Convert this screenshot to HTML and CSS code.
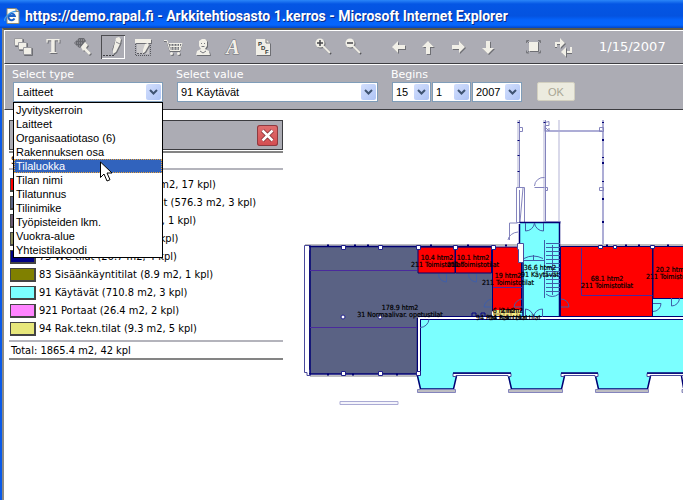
FILE: index.html
```html
<!DOCTYPE html>
<html lang="fi">
<head>
<meta charset="utf-8">
<title>Arkkitehtiosasto 1.kerros</title>
<link rel="stylesheet" href="styles.css">
</head>
<body>
<div class="window">
<header class="titlebar">
  <svg class="page-icon" width="16" height="16" viewBox="0 0 16 16" aria-hidden="true">
    <path d="M3 .5h9l3 3v12H3z" fill="#fffef4" stroke="#8d8a78"/>
    <path d="M12 .5v3h3" fill="#d8d4c0" stroke="#8d8a78"/>
    <path d="M10.500 10.500A3.300 3.300 0 1 1 10.800 8H5" fill="none" stroke="#1c62c8" stroke-width="2"/>
    <path d="M1 13C-1 10 7 3 12 3.500" fill="none" stroke="#3f9be8" stroke-width="1.300"/>
  </svg>
  <h1 class="title">https://demo.rapal.fi - Arkkitehtiosasto 1.kerros - Microsoft Internet Explorer</h1>
</header>
<div class="frame">
<nav class="toolbar" aria-label="Toolbar">
  <div class="group">
    <button class="tool" aria-label="Layers"><svg viewBox="0 0 24 24"><g class="lit cut"><path d="M3.500 3.500h8v7h-8z"/><path d="M7.500 7.500h8v7h-8z"/><path d="M12.500 12.500h8v7h-8z"/></g></svg></button>
    <button class="tool" aria-label="Text"><svg viewBox="0 0 24 24"><text class="lit letter-t" x="12" y="18">T</text></svg></button>
    <button class="tool" aria-label="Paint"><svg viewBox="0 0 24 24"><path d="M3 8l5-5h5l2 3-6 7-2-1z" fill="#68696f"/><path d="M4 8h8M6 5h8M6 11h4" stroke="#a9a9b0" stroke-dasharray="1 1"/><path class="lit" d="M10 12l4-5 3 3-2 3 5 5-2 2-5-5-1 1z"/></svg></button>
    <button class="tool active" aria-label="Draw"><svg viewBox="0 0 24 24"><path d="M2 20.500h11" stroke="#3e3f43" stroke-dasharray="2 1"/><path d="M13 20L20 8M13 19l-1-5 3-9" stroke="#55565b" fill="none"/><path class="lit" d="M15 3l3-1 2 2-1 5-4 8-3 2v-4z"/><path d="M15 7l4 2" stroke="#8b8b90"/></svg></button>
    <button class="tool" aria-label="Edit area"><svg viewBox="0 0 24 24"><path class="lit" d="M4 4h16v4H4z"/><path d="M4.500 9v11.500h15V9" fill="none" stroke="#55565b" stroke-dasharray="1 1"/><path d="M6 9h12v10H6z" fill="#c9c8ca"/><path d="M6 18.500h7l4-8" fill="none" stroke="#5d5d62" stroke-dasharray="2 1"/><path class="lit" d="M14 9l3-1 1 2-4 7-2 1 0-3z"/></svg></button>
    <button class="tool" aria-label="Cart"><svg viewBox="0 0 24 24"><path d="M7 8h14l-2 7H9z" fill="#85868b"/><path class="line" d="M3 5.500h3l3 10h10l2-7M8 8.500h13M9 11.500h11M10 8v7M13 8v7M16 8v7M18.500 8v7"/><circle class="lit" cx="10.500" cy="18.500" r="1.500"/><circle class="lit" cx="17.500" cy="18.500" r="1.500"/></svg></button>
    <button class="tool" aria-label="User"><svg viewBox="0 0 24 24"><path class="lit" d="M8 6l3-2h3l2 2v5l-2 3 4 2 1 4H5l1-4 4-2-2-3z"/><path d="M10 8.500h1M13 8.500h1M10.500 11.500h3M9 16l3 2 3-2" fill="none" stroke="#77787d"/></svg></button>
    <button class="tool" aria-label="Font"><svg viewBox="0 0 24 24"><text class="letter-a" x="12" y="19">A</text></svg></button>
    <button class="tool" aria-label="PDF"><svg viewBox="0 0 24 24"><path class="lit" d="M5 4h10l4 4v12H5z"/><path d="M15 4v4h4" fill="none" stroke="#77787d"/><g class="pdf"><text x="7" y="11">P</text><text x="10" y="15">D</text><text x="14" y="19">F</text></g></svg></button>
  </div>
  <div class="group zooms">
    <button class="tool" aria-label="Zoom in"><svg viewBox="0 0 24 24"><circle class="lit" cx="9" cy="8" r="4.500"/><path class="handle" d="M12 11l7 7"/><path d="M6 8h6M9 5v6" stroke="#44454a" stroke-width="1.500"/></svg></button>
    <button class="tool" aria-label="Zoom out"><svg viewBox="0 0 24 24"><circle class="lit" cx="9" cy="8" r="4.500"/><path class="handle" d="M12 11l7 7"/><path d="M6 8h6" stroke="#44454a" stroke-width="1.500"/></svg></button>
  </div>
  <div class="group">
    <button class="tool" aria-label="Pan left"><svg viewBox="0 0 24 24"><path class="lit" d="M6 12l6-6v4h7v4h-7v4z"/></svg></button>
    <button class="tool" aria-label="Pan up"><svg viewBox="0 0 24 24"><path class="lit" d="M12 6l6 6h-4v7h-4v-7H6z"/></svg></button>
    <button class="tool" aria-label="Pan right"><svg viewBox="0 0 24 24"><path class="lit" d="M19 12l-6-6v4H6v4h7v4z"/></svg></button>
    <button class="tool" aria-label="Pan down"><svg viewBox="0 0 24 24"><path class="lit" d="M12 19l6-6h-4V6h-4v7H6z"/></svg></button>
  </div>
  <div class="group">
    <button class="tool" aria-label="Fit"><svg viewBox="0 0 24 24"><path class="lit" d="M8 7h9v9H8z"/><path d="M5.500 8V5.500H8M17 5.500h2.500V8M5.500 15.500v2.500H8M17 18h2.500v-2.500M6 6l2 2M19 6l-2 2M6 18l2-2M19 18l-2-2" fill="none" stroke="#77787d"/></svg></button>
    <button class="tool" aria-label="Refresh"><svg viewBox="0 0 24 24"><path class="line thick" d="M5 12V8h5"/><path class="lit" d="M9 3l5 5-5 5z"/><path class="line thick" d="M20 12v5h-5"/><path class="lit" d="M15 12l-5 5 5 5z"/></svg></button>
  </div>
  <time class="date" datetime="2007-01-15">1/15/2007</time>
</nav>
<form class="filters">
  <div class="field type">
    <label for="type">Select type</label>
    <div class="combo">
      <select id="type"><option>Laitteet</option></select>
      <svg class="drop" width="15" height="16" viewBox="0 0 15 16"><path d="M4 6l3.500 3.500L11 6"/></svg>
      <ul class="options" role="listbox" aria-label="Select type">
        <li role="option">Jyvityskerroin</li>
        <li role="option">Laitteet</li>
        <li role="option">Organisaatiotaso (6)</li>
        <li role="option">Rakennuksen osa</li>
        <li role="option" class="hot" aria-selected="true">Tilaluokka</li>
        <li role="option">Tilan nimi</li>
        <li role="option">Tilatunnus</li>
        <li role="option">Tilinimike</li>
        <li role="option">Työpisteiden lkm.</li>
        <li role="option">Vuokra-alue</li>
        <li role="option">Yhteistilakoodi</li>
      </ul>
      <svg class="pointer" width="13" height="22" viewBox="0 0 13 22" aria-hidden="true"><path d="M.500 1v15.500l3.500-3.500 3 7 3-1.300-3-6.700h5z" fill="#fff" stroke="#000"/></svg>
    </div>
  </div>
  <div class="field value">
    <label for="value">Select value</label>
    <div class="combo">
      <select id="value"><option>91 Käytävät</option></select>
      <svg class="drop" width="15" height="16" viewBox="0 0 15 16"><path d="M4 6l3.500 3.500L11 6"/></svg>
    </div>
  </div>
  <div class="field">
    <label for="day">Begins</label>
    <div class="dates">
      <div class="combo day"><select id="day"><option>15</option></select><svg class="drop" width="15" height="16" viewBox="0 0 15 16"><path d="M4 6l3.500 3.500L11 6"/></svg></div>
      <div class="combo day"><select aria-label="Month"><option>1</option></select><svg class="drop" width="15" height="16" viewBox="0 0 15 16"><path d="M4 6l3.500 3.500L11 6"/></svg></div>
      <div class="combo year"><select aria-label="Year"><option>2007</option></select><svg class="drop" width="15" height="16" viewBox="0 0 15 16"><path d="M4 6l3.500 3.500L11 6"/></svg></div>
    </div>
  </div>
  <button class="ok" type="button" disabled>OK</button>
</form>
<main class="content">
  <section class="legend" aria-label="Legend">
    <div class="legend-head">
      <button class="close" aria-label="Close"><svg width="21" height="21" viewBox="0 0 21 21"><path d="M5.500 5.500l10 10M15.500 5.500l-10 10" stroke="#7c2a30" stroke-width="4"/><path d="M5.500 5.500l10 10M15.500 5.500l-10 10" stroke="#fff" stroke-width="2.500"/></svg></button>
    </div>
    <p class="caption">Selite</p>
    <ul class="rows">
      <li><i class="swatch red"></i>211 Toimistotilat (291.5 m2, 17 kpl)</li>
      <li><i class="swatch slate"></i>31 Normaaliva opetustilat (576.3 m2, 3 kpl)</li>
      <li><i class="swatch plum"></i>62 Ravintolatil. (62.7 m2, 1 kpl)</li>
      <li><i class="swatch moss"></i>72 Varastot (53.1 m2, 4 kpl)</li>
      <li><i class="swatch navy"></i>75 WC-tilat (26.7 m2, 4 kpl)</li>
      <li><i class="swatch olive"></i>83 Sisäänkäyntitilat (8.9 m2, 1 kpl)</li>
      <li><i class="swatch cyan"></i>91 Käytävät (710.8 m2, 3 kpl)</li>
      <li><i class="swatch pink"></i>921 Portaat (26.4 m2, 2 kpl)</li>
      <li><i class="swatch straw"></i>94 Rak.tekn.tilat (9.3 m2, 5 kpl)</li>
    </ul>
    <p class="total">Total: 1865.4 m2, 42 kpl</p>
  </section>
  <svg class="plan" role="img" aria-label="Floor plan">
  <g transform="translate(-299 -110)">
    <g class="band">
      <path d="M517 120h3v67h-3zM543 120h3v102h-3zM558 120h2v102h-2z"/>
      <path class="deep" d="M602 120h2v126h-2zM546 130h56v2h-56z"/>
    </g>
    <g class="thin">
      <path d="M519.500 120v67M545.500 120v102M519 127.500h3.500v4H519M545.500 187.500h2v3h-2M599.500 127.500h4v4h-4zM599.500 187.500h4v3h-4zM545 122.500l4-1v4h-4v6M546 128l3 3v-3"/>
      <path d="M534.500 187.500h10M534.500 186a9 9 0 0 1 10-8.500"/>
      <path d="M516.500 187.500h8v35h-8zM519.500 190v32M523 188l-3 34"/>
      <path d="M509.500 240v-17h8M508 240a11 9 0 0 1 10-8"/>
    </g>
    <path class="ticks" d="M518.500 122v1M518.500 140v1M518.500 155v1M518.500 171v1M544.500 122v1M603 122v1M603 139v2M603 157v1M603 162v2M603 181v1M603 198v2M603 221v2"/>

    <path class="grey" d="M305 244h214v2H305zM560 244h123v2H560zM310 375h108v2H310z"/>
    <path class="slate" d="M310 246h182v71h-74v57H310z"/>
    <path class="hall" d="M520 222h39v95h-39zM653 298h30v19h-30z"/>
    <path class="hall" d="M419 319h264v54h-36v3l-1 0 5 0-4 13h-49l-3-13h3v-3h-37v3h3l-3 13h-50l-3-13h3v-3h-58v3h3l-3 13h-33l-3-13z"/>
    <path class="hall wall" d="M417.500 376l3 13h33l3-13M508.500 376l3 13h50l3-13M595.500 376l3 13h49l3-13M681.500 376l2 12"/>
    <path class="thin grey" d="M417.500 389.500h38v3h-38zM508.500 389.500h54v3h-54zM595.500 389.500h53v3h-53zM682 389.500h4v3h-4z"/>
    <path class="sill" d="M453 373.500h58v3h-3v-1h-52v1h-3zM561 373.500h37v3h-3v-1h-31v1h-3zM690 373.500h-43v3h3v-1h40"/>
    <path class="wall" d="M453 373h58M561 373h37M647 373h36"/>

    <g class="room">
      <path d="M418 247h37v26h-37zM455.500 247h36v26h-36zM492.500 247h29v64h-29zM560.500 246.500h92v70h-92zM653 246.500h36v52h-36z"/>
    </g>
    <path d="M493 310h27v7h-27z" fill="#f5e882"/>
    <path d="M493 314h8M504 311v6M511 311v6M517 311v6" stroke="#99894c"/>
    <path class="sill" d="M304.500 245.500h6v5h-1v119h1v6h-3.500v-3h-2.500z"/>
    <path class="wall" d="M310 246v128M309 246.500h183M309 374h109M417.500 318v56M519.500 222.500h40V317M519.500 224v20M523 262v55"/>
    <path class="trace" d="M310 270.500h107M310 327.500h107M493 287.500h29M581.500 248v47.500h71"/>
    <path d="M418 317h265v2H418z" fill="#fff"/>
    <path class="wall fine" d="M418 316.500h265M420 319.500h263M420.500 319v54"/>
    <path d="M418 319h2v53h-2z" fill="#fff"/>
    <path class="sill" d="M517.500 243.500h6v19h-5v-13h-1z"/>
    <path class="thin" d="M544.500 221.500h16v2"/>
    <g class="sill column">
      <path d="M341.500 245.500h4v4h-4zM378.500 245.500h4v4h-4zM416.500 245.500h4v4h-4zM453.500 245.500h4v4h-4zM491.500 245.500h4v4h-4zM341.500 371.500h4v4h-4zM378.500 371.500h4v4h-4zM416.500 371.500h4v4h-4zM598.500 245.500h4v3h-4zM613.500 245.500h3v3h-3zM650.500 245.500h4v3h-4z"/>
      <circle cx="343" cy="317" r="2"/><circle cx="380" cy="317" r="2"/>
    </g>
    <path class="ticks" d="M327 245.500h2M354 245.500h2M367 245.500h2M430 245.500h2M467 245.500h2M505 245.500h2M606 245.500h2M625 245.500h2M638 245.500h2M667 245.500h2M327 374.500h2M352 374.500h2M396 374.500h2"/>

    <g class="arc">
      <path d="M525.500 223v8a9 9 0 0 0 9-8a9 9 0 0 0 9 8v-8M438.500 274a8 8 0 0 0 8 8v-8M468.500 274a8 8 0 0 0 8 8v-8M420 327.500a9 9 0 0 0 9-8M492 299a9 9 0 0 0-8 8h8M522 299a9 9 0 0 0-8 8h8M561 299a8 8 0 0 1 8 8h-8M525.500 317v-8a9 9 0 0 1 8 8a9 9 0 0 1 9-8v8M653 311.500a8 8 0 0 0 8-8h-8M671.500 298v8a8 8 0 0 0 8-8"/>
      <path d="M472 317v-4h4v4M481 317v-4h4v4" stroke="#000080"/>
      <path d="M524 258.500q9-5 19 0M524 260.500h20M533.500 255v6M544.500 240v58M552.500 245v50M546 294q6 5 13 0"/>
      <path d="M546 243.500h14M546 247.500h14M546 251.500h14M546 255.500h14M546 259.500h14M546 263.500h14M546 267.500h14M546 271.500h14M546 275.500h14M546 279.500h14M546 283.500h14M546 287.500h14M546 291.500h14"/>
    </g>
    <path d="M340 401.500h58v3h-58z" fill="#f4f4fb" stroke="#aaaad4"/>

    <g class="names">
      <text x="400" y="310">178.9 htm2</text><text x="400" y="317">31 Normaalivar. opetustilat</text>
      <text x="437" y="260">10.4 htm2</text><text x="437" y="267">211 Toimistotilat</text>
      <text x="473" y="260">10.1 htm2</text><text x="473" y="267">211 Toimistotilat</text>
      <text x="508" y="278">19 htm2</text><text x="508" y="285">211 Toimistotilat</text>
      <text x="540" y="270">36.6 htm2</text><text x="540" y="277">91 Käytävät</text>
      <text x="607" y="281">68.1 htm2</text><text x="607" y="288">211 Toimistotilat</text>
      <text x="672" y="272">20.2 htm2</text><text x="672" y="279">211 Toimistotilat</text>
      <text x="504" y="313">6 htm2</text><text x="512" y="313">2 htm2</text>
      <text x="502" y="320">94 Rak.tekn.tilat</text><text x="515" y="320">94 Rak.tekn.tilat</text>
    </g>
  </g>
  </svg>
</main>
</div>
</div>
</body>
</html>
```
FILE: styles.css
```css
* { box-sizing: border-box; }
body { margin: 0; background: #fff; color: #000; font-family: "Liberation Sans", Arial, sans-serif; font-size: 11px; overflow: hidden; }
button { padding: 0; border: 0; background: none; font: inherit; }
ul, p, h1 { margin: 0; padding: 0; list-style: none; font-weight: normal; }

.window { min-height: 100vh; display: flex; flex-direction: column; border-left: 2px solid #0a5ae8; }
.titlebar { height: 28px; margin-left: -2px; padding: 3px 0 0 4px; display: flex; align-items: center; gap: 5px; background: linear-gradient(#2a86f8 0, #0456e4 4px, #0453e0 16px, #0563fa 20px, #0566fd 25px, #0345c4 28px); }
.page-icon { flex: none; }
.title { color: #fff; font-family: Roboto, sans-serif; font-size: 14px; line-height: 20px; font-weight: 700; white-space: nowrap; text-shadow: 1px 1px 0 #0a2a86; }

.frame { flex: 1; border-top: 2px solid #5a5848; border-left: 2px solid #8b8a86; }
.toolbar { height: 34px; padding: 4px 6px 0; display: flex; border-top: 1px solid #fff; border-left: 1px solid #fff; border-bottom: 1px solid #3c3c40; background: #acacb4; }
.group { display: flex; gap: 6px; margin-right: 21px; }
.group:first-child { margin-right: 36px; }
.tool { width: 24px; height: 24px; flex: none; }
.tool svg { display: block; width: 24px; height: 24px; fill: none; }
.tool.active { box-shadow: inset 1px 1px 0 #4c4c50, inset -1px -1px 0 #fff; }
.lit { fill: #f1efe7; filter: drop-shadow(1px 1px 0 #6e6f74); }
.cut path { stroke: #9a9a9f; stroke-width: 1; }
.line { fill: none; stroke: #f1efe7; filter: drop-shadow(0 1px 0 #6e6f74); }
.thick { stroke-width: 2; }
.handle { stroke: #f1efe7; stroke-width: 2; filter: drop-shadow(1px 1px 0 #55565b); }
.letter-t { font: 700 18px "DejaVu Serif", serif; text-anchor: middle; }
.letter-a { font: italic 700 20px "Liberation Serif", serif; text-anchor: middle; fill: #f1efe7; stroke: #6e6f74; stroke-width: 1px; paint-order: stroke; }
.pdf { font: 700 6px "Liberation Sans", sans-serif; fill: #333; }
.date { margin-left: 3px; color: #fff; font: 13px/24px "DejaVu Sans", Verdana, sans-serif; }

.filters { height: 46px; padding: 3px 0 0 8px; display: flex; align-items: flex-start; border-top: 1px solid #fff; border-left: 1px solid #fff; border-bottom: 1px solid #3c3c40; background: #acacb4; }
.field { margin-right: 15px; }
.field label { display: block; margin-left: -1px; color: #fff; font: 11px/14px "DejaVu Sans", Verdana, sans-serif; }
.type { width: 150px; margin-right: 14px; }
.value { width: 201px; margin-right: 14px; }
.combo { position: relative; display: flex; height: 20px; background: #fff; border: 1px solid #7f9db9; }
.combo select { flex: 1; min-width: 0; padding: 0 3px; border: 0; background: none; color: #000; font: 11px/18px "Liberation Sans", Arial, sans-serif; appearance: none; }
.drop { flex: none; margin: 1px; border-radius: 2px; background: linear-gradient(135deg, #d3dffd, #aec4f6); fill: none; stroke: #3f5472; stroke-width: 2; }
.dates { display: flex; gap: 1px; }
.day { width: 39px; }
.year { width: 50px; }
.ok { width: 38px; height: 19px; margin-top: 14px; border: 1px solid #d3d0c0; border-radius: 2px; background: #ecebdf; color: #a8a594; font-size: 11px; }

.options { position: absolute; z-index: 2; top: 19px; left: -1px; right: -1px; border: 1px solid #000; background: #fff; }
.options li { height: 14px; padding-left: 2px; line-height: 14px; font-size: 11px; }
.options .hot { background: #3163bd; color: #fff; outline: 1px dotted #e8a33c; outline-offset: -1px; }
.pointer { position: absolute; z-index: 3; left: 86px; top: 78px; }

.content { display: flex; background: #fff; }
.legend { flex: none; width: 274px; margin: 10px 16px 0 5px; font: 11px/18px "DejaVu Sans Condensed", Tahoma, sans-serif; white-space: nowrap; }
.legend-head { height: 30px; margin-bottom: 1px; padding: 0 4px; display: flex; align-items: center; justify-content: flex-end; border: 1px solid #3c3c40; background: #acacb4; }
.close { width: 21px; height: 21px; border-radius: 3px; background: linear-gradient(#e07070, #d44c50); box-shadow: inset 0 0 0 1px #8c3a40; }
.close svg { display: block; }
.caption { height: 19px; padding-left: 2px; border-top: 2px solid #848484; border-bottom: 2px solid #b4b4bc; line-height: 15px; }
.rows { padding: 6px 0 2px 1px; }
.rows li { display: flex; align-items: center; gap: 3px; height: 18px; }
.swatch { width: 26px; height: 14px; border: 1px solid #444; border-width: 1px 2px 2px 1px; }
.red { background: #f00; }
.slate { background: #5a6284; fill: #5a6284; }
.plum { background: #6b5a73; }
.moss { background: #8c8c5a; }
.navy { background: #000084; }
.olive { background: #808000; }
.cyan { background: #7bffff; }
.pink { background: #ff84ff; }
.straw { background: #e7e77b; }
.total { height: 20px; padding-left: 2px; border-top: 2px solid #b4b4bc; border-bottom: 2px solid #848484; line-height: 17px; }

.plan { flex: 1; min-width: 0; height: 300px; overflow: hidden; }
.band { fill: #d9d9ea; }
.deep { fill: #adadd6; }
.thin { fill: none; stroke: #8484bd; stroke-width: 1; }
.ticks { fill: none; stroke: #000073; stroke-width: 2; }
.grey { fill: #bdbdc1; }
.hall { fill: #7bffff; }
.wall { stroke: #000073; stroke-width: 1.5; }
path.wall:not(.hall) { fill: none; }
path.fine { stroke-width: 1; }
.room { fill: #f00; stroke: #000073; stroke-width: 1; }
.sill { fill: #fff; stroke: #4a4a9c; stroke-width: 1; }
.column { stroke: #21218c; }
.trace { fill: none; stroke: #4a2a9c; stroke-width: 1; }
.arc { fill: none; stroke: #3f5ea8; stroke-width: 1; }
.names { font: 7px "DejaVu Sans Condensed", Tahoma, sans-serif; text-anchor: middle; fill: #000; stroke: #000; stroke-width: .2px; }
```
